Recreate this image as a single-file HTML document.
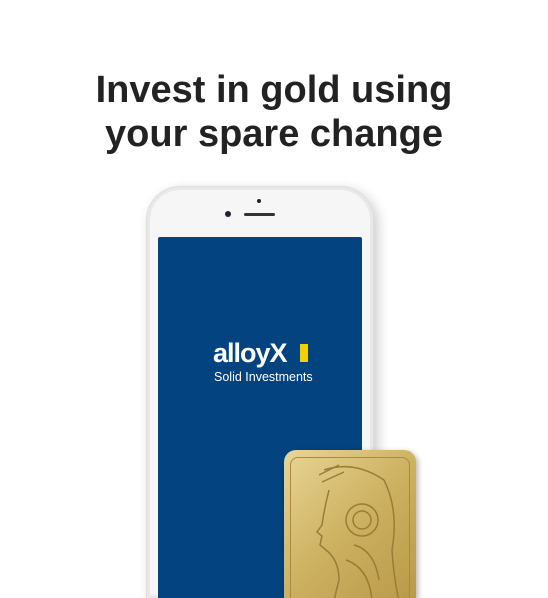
<!DOCTYPE html>
<html><head><style>
html,body{margin:0;width:548px;height:598px;overflow:hidden}
body{background:#fff;position:relative;font-family:"Liberation Sans",sans-serif}
h1{position:absolute;top:68px;left:0;width:548px;margin:0;text-align:center;font-size:38px;line-height:44px;font-weight:bold;color:#222;letter-spacing:0}
.phone{position:absolute;left:146px;top:186px;width:226px;height:411px;border-radius:34px 34px 0 0;border-bottom:none;background:#f6f6f6;border:1px solid #ddd;box-shadow:4px 4px 12px rgba(0,0,0,.2),inset 0 0 0 3px #e8e8e8}
.screen{position:absolute;left:158px;top:237px;width:204px;height:361px;background:#024380;border-radius:2px 2px 0 0}
.cam{position:absolute;left:225px;top:211px;width:6px;height:6px;border-radius:50%;background:#223}
.dot{position:absolute;left:257px;top:199px;width:4px;height:4px;border-radius:50%;background:#222}
.spk{position:absolute;left:244px;top:213px;width:31px;height:3px;border-radius:2px;background:#333}
.logo{position:absolute;left:213px;top:338px;color:#fff;font-weight:bold;font-size:27px;letter-spacing:-1px}
.ybar{position:absolute;left:300px;top:344px;width:8px;height:18px;background:#f5d000}
.sub{position:absolute;left:214px;top:370px;color:#fff;font-size:12.5px}
.bar{position:absolute;left:284px;top:450px;width:132px;height:148px;border-radius:12px 12px 0 0;background:linear-gradient(135deg,#e8d596,#cdb262 50%,#b99a48);box-shadow:2px 2px 6px rgba(0,0,0,.3);overflow:hidden}
.bar .in{position:absolute;left:6px;top:7px;right:6px;bottom:-10px;border:1px solid #a88a40;border-radius:8px}
</style></head><body>
<h1>Invest in gold using<br>your spare change</h1>
<div class="phone"></div>
<div class="dot"></div><div class="cam"></div><div class="spk"></div>
<div class="screen"></div>
<div class="logo">alloyX</div><div class="ybar"></div>
<div class="sub">Solid Investments</div>
<div class="bar"><div class="in"></div>
<svg width="132" height="148" style="position:absolute;left:0;top:0" fill="none" stroke="#9a7c36" stroke-width="1.5">
<path d="M40 20 Q70 10 100 30 Q115 60 108 100 Q110 130 115 150"/>
<path d="M45 40 Q40 60 38 75 L33 82 L38 86 L36 95 L42 100 Q55 110 55 130 L50 150"/>
<circle cx="78" cy="70" r="16"/><circle cx="78" cy="70" r="9"/>
<path d="M70 95 Q90 100 95 130 M62 110 Q85 118 88 150"/>
<path d="M35 25 L55 15 M38 32 L60 22"/>
</svg></div>
</body></html>
